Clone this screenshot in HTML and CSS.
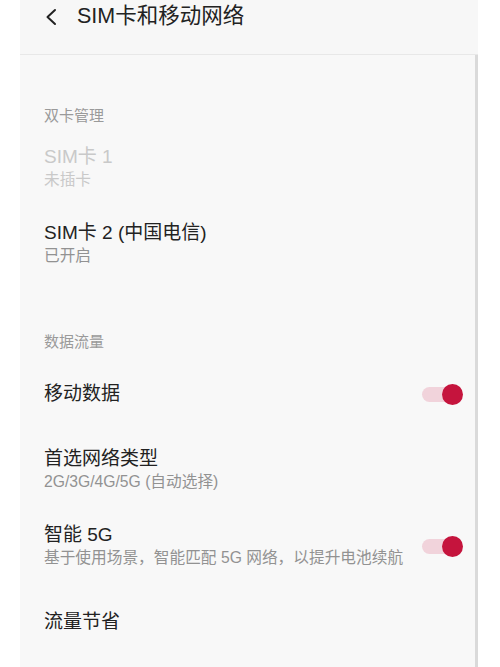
FILE: index.html
```html
<!DOCTYPE html>
<html lang="zh-CN">
<head>
<meta charset="utf-8">
<title>SIM卡和移动网络</title>
<link rel="stylesheet" href="styles.css">
</head>
<body>
<div class="screen">
  <header class="header">
    <svg class="back" width="14" height="18" viewBox="0 0 14 18"><path d="M11 2 L3.5 9 L11 16" fill="none" stroke="#222" stroke-width="2" stroke-linecap="round" stroke-linejoin="round"/></svg>
    <span class="title">SIM卡和移动网络</span>
  </header>
  <main class="list">
    <div class="section-label first">双卡管理</div>
    <div class="row disabled">
      <div class="text">
        <div class="row-title">SIM卡 1</div>
        <div class="row-sub">未插卡</div>
      </div>
    </div>
    <div class="row">
      <div class="text">
        <div class="row-title">SIM卡 2 (中国电信)</div>
        <div class="row-sub">已开启</div>
      </div>
    </div>
    <div class="section-label">数据流量</div>
    <div class="row">
      <div class="text">
        <div class="row-title">移动数据</div>
      </div>
      <div class="toggle"><span class="knob"></span></div>
    </div>
    <div class="row">
      <div class="text">
        <div class="row-title">首选网络类型</div>
        <div class="row-sub">2G/3G/4G/5G (自动选择)</div>
      </div>
    </div>
    <div class="row">
      <div class="text">
        <div class="row-title">智能 5G</div>
        <div class="row-sub">基于使用场景，智能匹配 5G 网络，以提升电池续航</div>
      </div>
      <div class="toggle"><span class="knob"></span></div>
    </div>
    <div class="row">
      <div class="text">
        <div class="row-title">流量节省</div>
      </div>
    </div>
  </main>
</div>
</body>
</html>
```
FILE: styles.css
```css
html, body {
  margin: 0;
  padding: 0;
  background: #ffffff;
}
body {
  font-family: "Liberation Sans", "Noto Sans CJK SC", sans-serif;
  color: #222222;
  overflow: hidden;
}
.screen {
  margin-left: 20px;
  width: 458px;
  height: 667px;
  display: flex;
  flex-direction: column;
}
.header {
  height: 54px;
  border-bottom: 1px solid #e8e8e8;
  background: #f7f7f7;
  display: flex;
  align-items: flex-start;
  padding-left: 24px;
  box-sizing: content-box;
}
.back {
  margin-top: 8px;
  flex: none;
}
.title {
  margin-left: 19px;
  font-size: 21.5px;
  line-height: 32px;
  color: #222;
}
.list {
  flex: 1;
  background: #f8f8f8;
  width: 455px;
  border-right: 3px solid #dadada;
}
.section-label {
  padding: 50px 24px 4px;
  font-size: 15px;
  line-height: 20px;
  color: #9a9a9a;
}
.section-label.first {
  padding-top: 51px;
}
.row {
  min-height: 76px;
  display: flex;
  align-items: center;
  padding: 0 12px 0 24px;
}
.text {
  flex: 1;
}
.row-title {
  font-size: 19px;
  line-height: 24px;
  color: #222;
}
.row-sub {
  font-size: 15.7px;
  line-height: 22px;
  color: #929292;
}
.row.disabled .row-title,
.row.disabled .row-sub {
  color: #c9c9c9;
}
.toggle {
  position: relative;
  width: 41px;
  height: 21px;
  flex: none;
}
.toggle::before {
  content: "";
  position: absolute;
  left: 0;
  right: 4px;
  top: 3px;
  height: 15px;
  border-radius: 8px;
  background: #f1d3db;
}
.knob {
  position: absolute;
  right: 0;
  top: 0;
  width: 21px;
  height: 21px;
  border-radius: 50%;
  background: #c5143d;
}
```
